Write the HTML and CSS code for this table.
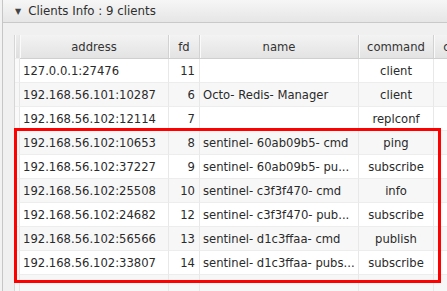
FILE: index.html
```html
<!DOCTYPE html>
<html>
<head>
<meta charset="utf-8">
<link rel="stylesheet" href="styles.css">
</head>
<body>
<div class="panel">
  <div class="panel-head"><span class="caret">&#9660;</span><span class="title">Clients Info : 9 clients</span></div>
  <div class="panel-body">
    <div class="grid">
      <div class="hc rh"></div><div class="hc">address</div><div class="hc">fd</div><div class="hc">name</div><div class="hc">command</div><div class="hc last">connected</div>

      <div class="rh"></div><div class="c addr">127.0.0.1:27476</div><div class="c fd">11</div><div class="c nm"></div><div class="c cmd">client</div><div class="c"></div>
      <div class="rh alt"></div><div class="c addr alt">192.168.56.101:10287</div><div class="c fd alt">6</div><div class="c nm alt">Octo- Redis- Manager</div><div class="c cmd alt">client</div><div class="c alt"></div>
      <div class="rh"></div><div class="c addr">192.168.56.102:12114</div><div class="c fd">7</div><div class="c nm"></div><div class="c cmd">replconf</div><div class="c"></div>
      <div class="rh alt"></div><div class="c addr alt">192.168.56.102:10653</div><div class="c fd alt">8</div><div class="c nm alt">sentinel- 60ab09b5- cmd</div><div class="c cmd alt">ping</div><div class="c alt"></div>
      <div class="rh"></div><div class="c addr">192.168.56.102:37227</div><div class="c fd">9</div><div class="c nm">sentinel- 60ab09b5- pu...</div><div class="c cmd">subscribe</div><div class="c"></div>
      <div class="rh alt"></div><div class="c addr alt">192.168.56.102:25508</div><div class="c fd alt">10</div><div class="c nm alt">sentinel- c3f3f470- cmd</div><div class="c cmd alt">info</div><div class="c alt"></div>
      <div class="rh"></div><div class="c addr">192.168.56.102:24682</div><div class="c fd">12</div><div class="c nm">sentinel- c3f3f470- pub...</div><div class="c cmd">subscribe</div><div class="c"></div>
      <div class="rh alt"></div><div class="c addr alt">192.168.56.102:56566</div><div class="c fd alt">13</div><div class="c nm alt">sentinel- d1c3ffaa- cmd</div><div class="c cmd alt">publish</div><div class="c alt"></div>
      <div class="rh"></div><div class="c addr">192.168.56.102:33807</div><div class="c fd">14</div><div class="c nm">sentinel- d1c3ffaa- pubs...</div><div class="c cmd">subscribe</div><div class="c"></div>
      <div class="rh alt"></div><div class="c alt"></div><div class="c alt"></div><div class="c alt"></div><div class="c alt"></div><div class="c alt"></div>
    </div>
  </div>
  <div class="mark"></div>
</div>
</body>
</html>
```

FILE: styles.css
```css
html, body {
  margin: 0;
  padding: 0;
  background: #f2f2f2;
  width: 447px;
  height: 291px;
  overflow: hidden;
}
.panel {
  position: relative;
  margin-left: 2px;
  height: 291px;
  border-left: 1px solid #c6c6c6;
  background: #f0f0f0;
  font-family: "DejaVu Sans", "Open Sans", sans-serif;
  color: #333;
}
.panel-head {
  height: 23px;
  box-sizing: border-box;
  border-bottom: 1px solid #c9c9c9;
  background: linear-gradient(#f6f6f6, #e6e6e6);
  display: flex;
  align-items: center;
  padding-left: 12px;
  font-size: 11.8px;
}
.caret {
  font-size: 8px;
  color: #444;
  margin-right: 7px;
}
.title {
  color: #2e2e2e;
}
.panel-body {
  padding: 12px 0 0 11px;
  overflow: hidden;
}
.grid {
  display: grid;
  grid-template-columns: 5px 149px 31px 159px 75px 80px;
  grid-auto-rows: 24px;
  grid-template-rows: 24px;
  width: 560px;
  font-size: 11.6px;
  background: #fff;
  border-left: 1px solid #d6d6d6;
}
.hc {
  background: linear-gradient(#f3f3f3, #e3e3e3);
  border-right: 1px solid #d2d2d2;
  border-bottom: 1px solid #cfcfcf;
  box-shadow: inset 1px 0 0 #fafafa;
  display: flex;
  align-items: center;
  justify-content: center;
  color: #333;
  font-size: 11.6px;
}
.hc.rh {
  background: linear-gradient(#ececec, #dedede);
}
.rh {
  background: #fafafa;
  border-right: 1px solid #e6e6e6;
  border-bottom: 1px solid #eeeeee;
}
.c {
  background: #fff;
  border-right: 1px solid #e8e8e8;
  border-bottom: 1px solid #ededed;
  display: flex;
  align-items: center;
  white-space: nowrap;
  overflow: hidden;
  color: #2a2a2a;
}
.alt {
  background: #f7f7f7;
}
.addr {
  padding-left: 3px;
}
.fd {
  justify-content: flex-end;
  padding-right: 4px;
}
.nm {
  padding-left: 3px;
}
.cmd {
  justify-content: center;
}
.mark {
  position: absolute;
  left: 11px;
  top: 128px;
  width: 421px;
  height: 149px;
  border: 3px solid #ff0000;
}
```
